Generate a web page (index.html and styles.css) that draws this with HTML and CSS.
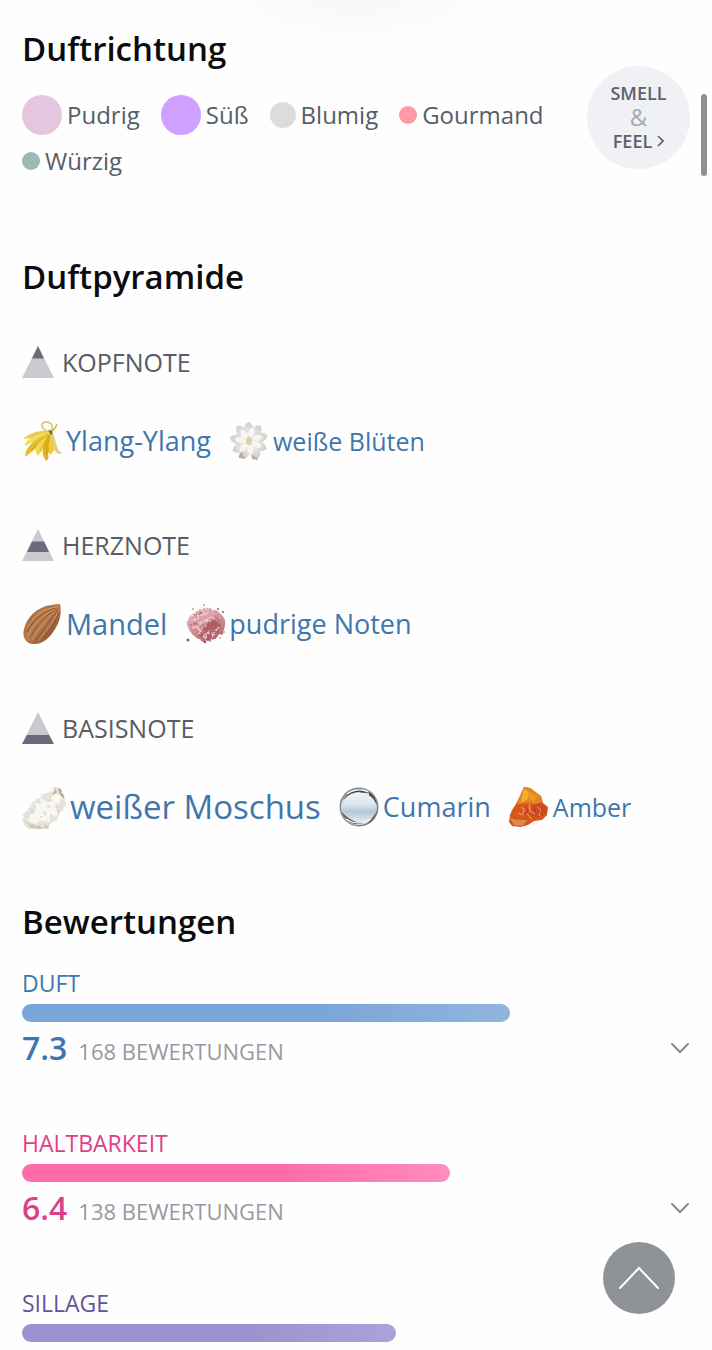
FILE: index.html
```html
<!DOCTYPE html>
<html lang="de">
<head>
    <meta charset="UTF-8">
    <meta name="viewport" content="width=device-width, initial-scale=1.0">
    <title>Duftpyramide</title>
    <link rel="stylesheet" href="styles.css">
</head>
<body>
    <div class="top-shade"></div>
    <main class="page">
        <section class="accords">
            <div class="accords-main">
                <h2>Duftrichtung</h2>
                <ul class="accord-list">
                    <li><span class="dot dot-lg powdery"></span>Pudrig</li>
                    <li><span class="dot dot-lg sweet"></span>Süß</li>
                    <li><span class="dot dot-md floral"></span>Blumig</li>
                    <li><span class="dot dot-sm gourmand"></span>Gourmand</li>
                    <li><span class="dot dot-sm spicy"></span>Würzig</li>
                </ul>
            </div>
            <a href="#" class="smell-feel">
                <span>SMELL</span>
                <span class="amp">&amp;</span>
                <span class="feel">FEEL
                    <svg width="7" height="12" viewBox="0 0 7 12"><path d="M1 1l5 5-5 5" fill="none" stroke="currentColor" stroke-width="1.6"/></svg>
                </span>
            </a>
        </section>

        <section class="pyramid">
            <h2>Duftpyramide</h2>
            <div class="levels">
                <div class="level">
                    <h3>
                        <svg width="32" height="32" viewBox="0 0 32 32"><path d="M16 0l16 32H0z" fill="#cac9d0"/><path d="M16 0l6 12.500H10z" fill="#6c6a7a"/></svg>
                        KOPFNOTE
                    </h3>
                    <div class="notes">
                        <a href="#" class="note size-2">
                            <svg class="note-icon" viewBox="0 0 40 40">
                                <path d="M27 11C18 8 18 1 24 1c6 0 9 6 3 10" fill="none" stroke="#d9cf7c" stroke-width="1.800"/>
                                <path d="M28 11q5-2 7-8" fill="none" stroke="#c6bb55" stroke-width="1.500"/>
                                <path d="M28 11C20 8 7 12 1 18q9-1 14-1z" fill="#e8cc4c"/>
                                <path d="M28 11C17 12 3 17 3 25q8-5 17-7z" fill="#f3dc62"/>
                                <path d="M27 12C14 17 3 25 3 36q10-7 20-17z" fill="#e6bd2e"/>
                                <path d="M27 12C19 18 9 27 16 35q7-8 12-18z" fill="#f5d94d"/>
                                <path d="M28 12C21 20 18 33 24 40q4-2 2-7 6-10 4-20z" fill="#deb11f"/>
                                <path d="M29 12c-3 9-3 18-1 22 6-4 7-14 2-22z" fill="#f2cb35"/>
                                <path d="M29 12c6 4 4 17 11 20-3 3-8-1-9-8z" fill="#e3ce80"/>
                                <path d="M26 14Q15 21 9 30M27 15q-6 8-9 15M28 16q-4 10-3 17" fill="none" stroke="#c39a22" stroke-width=".7"/>
                                <path d="M26 9l4 1 1 4-3-1z" fill="#77752c"/>
                            </svg>
                            Ylang-Ylang
                        </a>
                        <a href="#" class="note size-1">
                            <svg class="note-icon" viewBox="0 0 40 40">
                                <defs>
                                    <path id="petal" d="M20 20q-8-8-3-17l3-2 3 3q4 9-3 16z"/>
                                    <radialGradient id="bloom" gradientUnits="userSpaceOnUse" cx="20" cy="20" r="20"><stop offset="0" stop-color="#cfc7b4"/><stop offset=".5" stop-color="#eae6e1"/><stop offset="1" stop-color="#cfc9c4"/></radialGradient>
                                </defs>
                                <path d="M10 37q-1-5 4-7l4 3-2 5zM22 33l6 1 1 5-6-1z" fill="#b7afa9"/>
                                <g fill="url(#bloom)" stroke="#cdc7c1" stroke-width=".4">
                                    <use href="#petal"/>
                                    <use href="#petal" transform="rotate(38 20 20)"/>
                                    <use href="#petal" transform="rotate(74 20 20)"/>
                                    <use href="#petal" transform="rotate(116 20 20)"/>
                                    <use href="#petal" transform="rotate(150 20 20)"/>
                                    <use href="#petal" transform="rotate(196 20 20) translate(2 2) scale(.9)"/>
                                    <use href="#petal" transform="rotate(238 20 20)"/>
                                    <use href="#petal" transform="rotate(280 20 20)"/>
                                    <use href="#petal" transform="rotate(322 20 20)"/>
                                </g>
                                <g fill="#f8f6f3" stroke="#dcd6cf" stroke-width=".5" transform="rotate(17 20 20) translate(5 5) scale(.75)">
                                    <use href="#petal"/>
                                    <use href="#petal" transform="rotate(55 20 20)"/>
                                    <use href="#petal" transform="rotate(100 20 20)"/>
                                    <use href="#petal" transform="rotate(155 20 20)"/>
                                    <use href="#petal" transform="rotate(205 20 20)"/>
                                    <use href="#petal" transform="rotate(262 20 20)"/>
                                    <use href="#petal" transform="rotate(310 20 20)"/>
                                </g>
                                <ellipse cx="20" cy="20" rx="3" ry="4" fill="#ded19f"/>
                            </svg>
                            weiße Blüten
                        </a>
                    </div>
                </div>

                <div class="level">
                    <h3>
                        <svg width="32" height="32" viewBox="0 0 32 32"><path d="M16 0l16 32H0z" fill="#cac9d0"/><path d="M10 12.500h12l5 10.500H5z" fill="#6c6a7a"/></svg>
                        HERZNOTE
                    </h3>
                    <div class="notes">
                        <a href="#" class="note size-3">
                            <svg class="note-icon" viewBox="0 0 40 40">
                                <defs><linearGradient id="almond" x1="0" y1="0" x2="1" y2="1"><stop offset="0" stop-color="#9c6239"/><stop offset=".5" stop-color="#b97c4d"/><stop offset="1" stop-color="#6f3d20"/></linearGradient></defs>
                                <path d="M38 0c2 9 0 19-7 28-5 8-13 13-21 12-7-1-10-8-8-15C5 13 15 3 29 1q5-1 9-1z" fill="url(#almond)"/>
                                <path d="M36 3C24 4 12 12 5 24M36 4C26 7 13 17 6 31M36 5C28 11 18 22 10 36M37 6C32 16 25 26 16 37M30 4c-8 1-15 5-20 12" fill="none" stroke="#d9a473" stroke-width=".7"/>
                                <path d="M35 4C23 6 11 15 5 28M36 5C26 9 15 20 8 34M36 6C30 13 21 26 13 38M37 8c-2 8-8 18-16 26" fill="none" stroke="#7a4726" stroke-width=".7"/>
                            </svg>
                            Mandel
                        </a>
                        <a href="#" class="note size-2">
                            <svg class="note-icon" viewBox="0 0 40 40">
                                <defs>
                                    <linearGradient id="powder" x1=".2" y1="0" x2=".7" y2="1"><stop offset="0" stop-color="#e6bfc2"/><stop offset=".5" stop-color="#d08f95"/><stop offset="1" stop-color="#b0656d"/></linearGradient>
                                    <filter id="crumble"><feTurbulence type="fractalNoise" baseFrequency=".3" numOctaves="2" seed="4"/><feDisplacementMap in="SourceGraphic" scale="5"/></filter>
                                </defs>
                                <g filter="url(#crumble)">
                                    <path d="M2 21Q2 13 9 9q7-6 18-4 10 3 13 11 1 9-4 14-7 7-17 8Q5 32 2 21z" fill="url(#powder)"/>
                                    <path d="M18 23q7-7 12-7l6 5-3 9-10 6-8-3z" fill="#ad5d66"/>
                                    <path d="M7 18q7-8 17-9M8 25l11-8 9-4M13 31l8-9M26 32l8-9M19 34l6-8M11 21l4 6" fill="none" stroke="#efcfd0" stroke-width="1.500"/>
                                    <path d="M10 13l7-4M6 22l5-4M15 29l5-3M31 13l4 5M24 28l7-5" stroke="#bd6f78" stroke-width="1.300"/>
                                </g>
                                <g fill="#9d5962"><circle cx="3" cy="36" r="1.500"/><circle cx="20" cy="38" r="1.300"/><circle cx="33" cy="5" r="1"/><circle cx="38" cy="8" r="1"/><circle cx="8" cy="5" r=".8"/><circle cx="35" cy="34" r=".8"/><circle cx="19" cy="1" r=".8"/><circle cx="39" cy="28" r=".8"/></g>
                            </svg>
                            pudrige Noten
                        </a>
                    </div>
                </div>

                <div class="level">
                    <h3>
                        <svg width="32" height="32" viewBox="0 0 32 32"><path d="M16 0l16 32H0z" fill="#cac9d0"/><path d="M5 23h22l5 9H0z" fill="#6c6a7a"/></svg>
                        BASISNOTE
                    </h3>
                    <div class="notes">
                        <a href="#" class="note size-4">
                            <svg class="note-icon" viewBox="0 0 44 44">
                                <defs><filter id="rough"><feTurbulence type="fractalNoise" baseFrequency=".22" numOctaves="2" seed="9"/><feDisplacementMap in="SourceGraphic" scale="5"/></filter></defs>
                                <g filter="url(#rough)">
                                    <path d="M1 36l1-8 5-5 3-8 8-2 8-7 8-4 4 3 4 8 2 5-4 8-6 9-8 8-10 2-9-1-5-4z" fill="#e6e3da"/>
                                    <path d="M5 32l8-5-1-8 8-5 6 3 5-6 8 4-5 8 1 6-9 8-7-2-5 4-7-2z" fill="#f7f6f2"/>
                                    <path d="M9 25l4 2-3 3zM15 16l4 1-3 3zM21 26l4 1-3 3zM27 13l3 3-4 1zM29 30l3 1-3 3zM33 19l4 1-3 3z" fill="#dad6ca"/>
                                    <path d="M12 21l3-1-2 3zM18 31l3-1-2 3zM25 21l3-1-2 3zM36 25l2 1-2 3z" fill="#cdc7b5"/>
                                    <path d="M3 36l7 4 12 1 8-4-7 6-14 0z" fill="#cfcab7"/>
                                    <path d="M30 9l5-6-1 7zM36 3l3 1 3 9-4-3z" fill="#b9ad91"/>
                                    <path d="M33 11l4-2 2 6-4 2z" fill="#fbfaf7"/>
                                </g>
                            </svg>
                            weißer Moschus
                        </a>
                        <a href="#" class="note size-2">
                            <svg class="note-icon" viewBox="0 0 40 40">
                                <defs>
                                    <linearGradient id="drop" x1="0" y1="0" x2="0" y2="1"><stop offset="0" stop-color="#f0f5f8"/><stop offset=".4" stop-color="#dde7ee"/><stop offset=".65" stop-color="#b4c7d3"/><stop offset="1" stop-color="#e3ecf1"/></linearGradient>
                                    <linearGradient id="rim" x1="0" y1="0" x2="1" y2="1"><stop offset="0" stop-color="#5d646a"/><stop offset=".3" stop-color="#899298"/><stop offset=".6" stop-color="#8d979d"/><stop offset="1" stop-color="#555e65"/></linearGradient>
                                </defs>
                                <circle cx="20" cy="20" r="19.500" fill="url(#rim)"/>
                                <circle cx="20" cy="20" r="18" fill="#ccd4d9"/>
                                <path d="M4 13Q10 2 22 2l9 4Q14 4 4 13zM30 5q7 4 8 13-3-6-8-9z" fill="#41494f"/>
                                <path d="M2 24q4 10 13 13l9 0Q10 34 2 24zM38 24q-3 9-10 13 5-6 10-13z" fill="#525c63"/>
                                <path d="M2 20Q5 7 19 5q11 1 16 8 4 8 1 14-5 8-15 8Q8 34 2 20z" fill="url(#drop)"/>
                                <path d="M7 32q12 8 25 0M8 7Q19 0 29 5" fill="none" stroke="#fff" stroke-width="1.200"/>
                            </svg>
                            Cumarin
                        </a>
                        <a href="#" class="note size-1">
                            <svg class="note-icon" viewBox="0 0 40 40">
                                <path d="M15 0l6 1 11 8 2 7 5 4-1 8-5 5-8 1-6 4-7 2-9-1-3-4 1-7 2-5 4-6 4-8z" fill="#d4581a"/>
                                <path d="M15 0l6 1 11 8 1 6-8 2-9-1-8 2 3-9z" fill="#e5851f"/>
                                <path d="M15 2l5 3-1 7-7 4 1-7z" fill="#f2b033"/>
                                <path d="M21 5l7 5-3 4-5-2z" fill="#ee9c27"/>
                                <path d="M8 18l8-2 8 3-3 9-8 3-7-3z" fill="#dc5420"/>
                                <path d="M24 18l7-2 7 5-2 6-8 4-6-4z" fill="#cb4a20"/>
                                <path d="M1 31l7 2 10 0-4 6-9-1z" fill="#dc8b4c"/>
                                <path d="M12 20l3 2-1 5M20 17l1 7 5 3M28 20l4 3-2 6M9 26l5 2M18 27l5 5" fill="none" stroke="#f2a684" stroke-width=".9"/>
                                <path d="M17 19l2 5-4 3M25 20l1 4M34 22l-3 4M22 28l3 4" fill="none" stroke="#a13a17" stroke-width=".8"/>
                            </svg>
                            Amber
                        </a>
                    </div>
                </div>
            </div>
        </section>

        <section class="ratings">
            <h2>Bewertungen</h2>
            <div class="rating-list">
                <div class="rating scent">
                    <div class="rating-label">DUFT</div>
                    <div class="bar" style="width: 73%"></div>
                    <div class="rating-row">
                        <span class="score">7.3</span>
                        <span class="count">168 BEWERTUNGEN</span>
                        <button type="button" class="toggle" aria-label="Duft Details">
                            <svg width="20" height="12" viewBox="0 0 20 12"><path d="M2 2l8 8 8-8" fill="none" stroke="currentColor" stroke-width="2" stroke-linecap="round"/></svg>
                        </button>
                    </div>
                </div>
                <div class="rating longevity">
                    <div class="rating-label">HALTBARKEIT</div>
                    <div class="bar" style="width: 64%"></div>
                    <div class="rating-row">
                        <span class="score">6.4</span>
                        <span class="count">138 BEWERTUNGEN</span>
                        <button type="button" class="toggle" aria-label="Haltbarkeit Details">
                            <svg width="20" height="12" viewBox="0 0 20 12"><path d="M2 2l8 8 8-8" fill="none" stroke="currentColor" stroke-width="2" stroke-linecap="round"/></svg>
                        </button>
                    </div>
                </div>
                <div class="rating sillage">
                    <div class="rating-label">SILLAGE</div>
                    <div class="bar" style="width: 56%"></div>
                </div>
            </div>
        </section>
    </main>

    <div class="scroll-thumb"></div>
    <button type="button" class="to-top" aria-label="Nach oben">
        <svg width="42" height="24" viewBox="0 0 42 24"><path d="M2 22L21 2l19 20" fill="none" stroke="#fff" stroke-width="2" stroke-linecap="round"/></svg>
    </button>
</body>
</html>
```
FILE: styles.css
```css
*{
    box-sizing: border-box;
}
body{
    margin: 0;
    background-color: #fefefe;
    color: #565d66;
    font-family: "Open Sans", "Noto Sans", sans-serif;
}
h2, h3, ul{
    margin: 0;
    padding: 0;
    font-weight: 400;
}
h2{
    color: #0c0c0e;
    font-size: 33px;
    font-weight: 600;
    line-height: 42px;
}
a{
    text-decoration: none;
}
button{
    padding: 0;
    border: none;
    background: none;
    cursor: pointer;
}
svg{
    display: block;
    flex-shrink: 0;
}
.page{
    display: flex;
    flex-direction: column;
    padding: 28px 22px 0;
}
.top-shade{
    position: absolute;
    top: 0;
    left: 0;
    right: 0;
    height: 45px;
    background: radial-gradient(ellipse 150px 45px at 50% 0, #f7f7f7, #fefefe);
    z-index: -1;
}

/* Duftrichtung */
.accords{
    display: flex;
    justify-content: space-between;
    align-items: flex-start;
}
.accords-main{
    flex: 1;
}
.accord-list{
    display: flex;
    flex-wrap: wrap;
    gap: 6px 21px;
    margin-top: 25px;
    list-style: none;
}
.accord-list li{
    display: flex;
    align-items: center;
    gap: 5px;
    font-size: 24px;
    line-height: 40px;
}
.dot{
    border-radius: 50%;
}
.dot-lg{
    width: 40px;
    height: 40px;
}
.dot-md{
    width: 26px;
    height: 26px;
}
.dot-sm{
    width: 18px;
    height: 18px;
}
.powdery{
    background-color: #e6c5df;
}
.sweet{
    background-color: #cfa0ff;
}
.floral{
    background-color: #dddcdd;
}
.gourmand{
    background-color: #ff9aa6;
}
.spicy{
    background-color: #9bbab7;
}
.smell-feel{
    display: flex;
    flex-direction: column;
    align-items: center;
    justify-content: center;
    width: 103px;
    height: 103px;
    margin-top: 38px;
    padding-bottom: 2px;
    border-radius: 50%;
    background-color: #eff1f5;
    color: #5d616e;
    font-size: 18px;
    font-weight: 600;
    line-height: 24px;
}
.amp{
    color: #a5a9b3;
    font-size: 24px;
    font-weight: 400;
}
.feel{
    display: flex;
    align-items: center;
    gap: 5px;
}

/* Duftpyramide */
.pyramid{
    margin-top: 75px;
}
.levels{
    display: flex;
    flex-direction: column;
    gap: 63px;
    margin-top: 47px;
}
.level h3{
    display: flex;
    align-items: center;
    gap: 8px;
    font-size: 25px;
    line-height: 34px;
}
.notes{
    display: flex;
    flex-wrap: wrap;
    gap: 18px;
    margin-top: 38px;
}
.note{
    display: flex;
    align-items: center;
    gap: 4px;
    color: #3f76ad;
    line-height: 48px;
}
.note-icon{
    width: 40px;
    height: 40px;
}
.size-1{
    font-size: 25px;
}
.size-2{
    font-size: 27px;
}
.size-3{
    font-size: 29px;
}
.size-4{
    font-size: 33px;
}
.size-4 .note-icon{
    width: 44px;
    height: 44px;
}

/* Bewertungen */
.ratings{
    margin-top: 70px;
}
.rating-list{
    display: flex;
    flex-direction: column;
    gap: 59px;
    margin-top: 24px;
}
.rating-label{
    font-size: 23px;
    line-height: 32px;
}
.bar{
    height: 18px;
    margin-top: 5px;
    border-radius: 9px;
}
.rating-row{
    display: flex;
    align-items: baseline;
    gap: 11px;
    margin-top: 6px;
}
.score{
    font-size: 32px;
    font-weight: 600;
    line-height: 40px;
}
.count{
    color: #9699a3;
    font-size: 22px;
    line-height: 24px;
}
.toggle{
    align-self: center;
    margin-left: auto;
    color: #888795;
}
.scent{
    color: #3f76ad;
}
.scent .bar{
    background: linear-gradient(80deg, #7aa5d8 60%, #90b5df);
}
.longevity{
    color: #dd3f88;
}
.longevity .bar{
    background: linear-gradient(80deg, #ff6bab 60%, #ff8cc0);
}
.sillage{
    color: #62559b;
}
.sillage .bar{
    background: linear-gradient(80deg, #9d92cf 60%, #aca1d8);
}

.scroll-thumb{
    position: fixed;
    top: 94px;
    right: 5px;
    width: 6px;
    height: 82px;
    border-radius: 3px;
    background-color: #919191;
}
.to-top{
    position: fixed;
    right: 37px;
    bottom: 36px;
    display: flex;
    align-items: center;
    justify-content: center;
    width: 72px;
    height: 72px;
    border-radius: 50%;
    background-color: #8f9398;
}
```
